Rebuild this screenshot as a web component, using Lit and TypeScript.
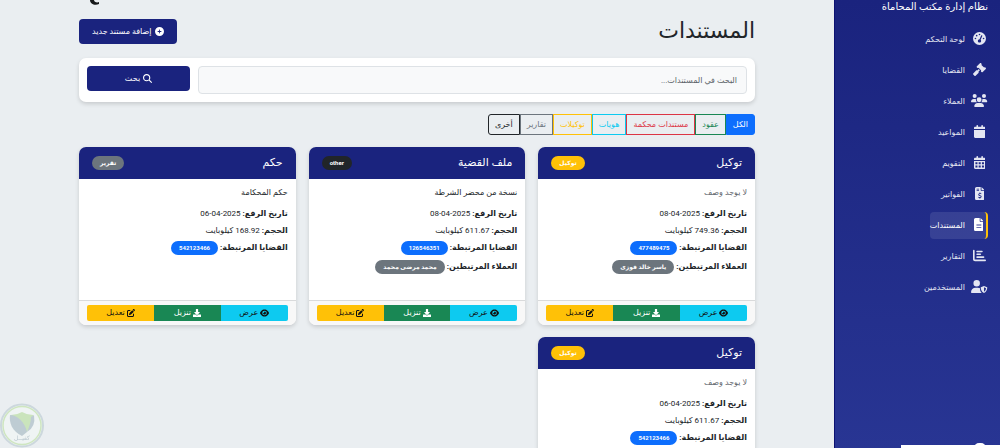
import { LitElement, html, css, svg } from "lit";
import { customElement, property } from "lit/decorators.js";
import { classMap } from "lit/directives/class-map.js";

interface Icon { box: string; d: string }

const ICONS: Record<string, Icon> = {
  gauge: { box: "0 0 512 512", d: "M0 256a256 256 0 1 1 512 0A256 256 0 1 1 0 256zM288 96a32 32 0 1 0 -64 0 32 32 0 1 0 64 0zM256 416c35.3 0 64-28.7 64-64c0-17.4-6.9-33.1-18.1-44.6L366 161.7c5.3-12.1-.2-26.3-12.3-31.6s-26.3 .2-31.6 12.3L257.9 288c-.6 0-1.3 0-1.9 0c-35.3 0-64 28.7-64 64s28.7 64 64 64zM176 144a32 32 0 1 0 -64 0 32 32 0 1 0 64 0zM96 288a32 32 0 1 0 0-64 32 32 0 1 0 0 64zm352-32a32 32 0 1 0 -64 0 32 32 0 1 0 64 0z" },
  gavel: { box: "0 0 512 512", d: "M318.6 9.4c-12.5-12.5-32.8-12.5-45.3 0l-120 120c-12.5 12.5-12.5 32.8 0 45.3l16 16c12.5 12.5 32.8 12.5 45.3 0l4-4L325.4 293.4l-4 4c-12.5 12.5-12.5 32.8 0 45.3l16 16c12.5 12.5 32.8 12.5 45.3 0l120-120c12.5-12.5 12.5-32.8 0-45.3l-16-16c-12.5-12.5-32.8-12.5-45.3 0l-4 4L330.6 74.6l4-4c12.5-12.5 12.5-32.8 0-45.3l-16-16zM166.600 297.400c-12.500-12.500-32.800-12.500-45.300 0l-112 112c-12.500 12.500-12.500 32.800 0 45.300l48 48c12.500 12.500 32.800 12.500 45.300 0l112-112c12.500-12.500 12.500-32.800 0-45.300l-1.400-1.400L272 285.300 226.700 240 168 298.700z" },
  users: { box: "0 0 640 512", d: "M144 0a80 80 0 1 1 0 160A80 80 0 1 1 144 0zM512 0a80 80 0 1 1 0 160A80 80 0 1 1 512 0zM0 298.700C0 239.800 47.800 192 106.700 192h42.700c15.900 0 31 3.500 44.600 9.700c-1.300 7.200-1.900 14.700-1.900 22.300c0 38.200 16.800 72.500 43.300 96H21.300C9.600 320 0 310.400 0 298.700zM405.300 320c26.600-23.500 42.600-57.800 42.600-96c0-7.600-.7-15-1.900-22.300c13.600-6.300 28.700-9.700 44.600-9.700h42.700C592.200 192 640 239.800 640 298.700c0 11.800-9.600 21.300-21.300 21.300zM224 224a96 96 0 1 1 192 0 96 96 0 1 1 -192 0zM128 485.300C128 411.700 187.700 352 261.300 352H378.700C452.300 352 512 411.700 512 485.300c0 14.700-11.900 26.700-26.700 26.700H154.700c-14.700 0-26.700-11.900-26.700-26.700z" },
  calendar: { box: "0 0 448 512", d: "M96 32V64H48C21.500 64 0 85.500 0 112v48H448V112c0-26.500-21.500-48-48-48H352V32c0-17.700-14.300-32-32-32s-32 14.300-32 32V64H160V32c0-17.700-14.300-32-32-32S96 14.300 96 32zM448 192H0V464c0 26.500 21.500 48 48 48H400c26.500 0 48-21.500 48-48V192z" },
  calendarDays: { box: "0 0 448 512", d: "M96 32V64H48C21.500 64 0 85.500 0 112v48H448V112c0-26.500-21.500-48-48-48H352V32c0-17.700-14.300-32-32-32s-32 14.300-32 32V64H160V32c0-17.700-14.300-32-32-32S96 14.300 96 32zM448 192H0V464c0 26.500 21.500 48 48 48H400c26.500 0 48-21.500 48-48V192zM56 248h80v72H56zM184 248h80v72h-80zM312 248h80v72h-80zM56 376h80v72H56zM184 376h80v72h-80zM312 376h80v72h-80z" },
  invoice: { box: "0 0 384 512", d: "M64 0C28.700 0 0 28.700 0 64V448c0 35.300 28.700 64 64 64H320c35.300 0 64-28.700 64-64V160H256c-17.700 0-32-14.300-32-32V0H64zM256 0V128H384L256 0zM64 64h96v32H64zM64 128h96v32H64zM176 216h32v28c18 2 32 6 46 11l-10 34c-22-8-40-11-53-10-20 0-30 8-29 18 2 12 18 16 42 23 30 9 57 24 56 57-1 30-22 50-52 56v31h-32v-30c-20-3-38-9-54-16l12-34c20 8 40 14 58 14 22 0 34-8 33-20-1-14-18-18-44-26-30-9-53-22-53-53 0-28 20-48 48-54z" },
  file: { box: "0 0 384 512", d: "M64 0C28.700 0 0 28.700 0 64V448c0 35.300 28.700 64 64 64H320c35.300 0 64-28.700 64-64V160H256c-17.700 0-32-14.300-32-32V0H64zM256 0V128H384L256 0zM96 256H288v36H96zM96 352H288v36H96z" },
  chart: { box: "0 0 512 512", d: "M32 32c17.700 0 32 14.300 32 32V400c0 8.800 7.200 16 16 16H480c17.700 0 32 14.300 32 32s-14.300 32-32 32H80c-44.200 0-80-35.800-80-80V64C0 46.300 14.300 32 32 32zM160 64H352c18 0 32 14 32 32s-14 32-32 32H160c-18 0-32-14-32-32s14-32 32-32zM160 176H288c18 0 32 14 32 32s-14 32-32 32H160c-18 0-32-14-32-32s14-32 32-32zM160 288H416c18 0 32 14 32 32s-14 32-32 32H160c-18 0-32-14-32-32s14-32 32-32z" },
  userShield: { box: "0 0 640 512", d: "M224 0a128 128 0 1 1 0 256A128 128 0 1 1 224 0zM178 304h92c31 0 60 8 85 22v42c0 60 26 112 70 144H30c-17 0-30-13-30-30C0 384 80 304 178 304zM512 240l122 48c4 2 6 5 6 10 0 80-30 170-128 214-98-44-128-134-128-214 0-5 2-8 6-10zM512 290v170c54-30 76-84 80-138z" },
  plus: { box: "0 0 512 512", d: "M256 512A256 256 0 1 0 256 0a256 256 0 1 0 0 512zM232 344V280H168c-13.300 0-24-10.700-24-24s10.700-24 24-24h64V168c0-13.300 10.700-24 24-24s24 10.700 24 24v64h64c13.300 0 24 10.700 24 24s-10.700 24-24 24H280v64c0 13.300-10.700 24-24 24s-24-10.700-24-24z" },
  search: { box: "0 0 512 512", d: "M416 208c0 45.900-14.900 88.300-40 122.700L502.600 457.400c12.500 12.500 12.500 32.800 0 45.300s-32.800 12.500-45.300 0L330.700 376c-34.400 25.200-76.800 40-122.700 40C93.100 416 0 322.900 0 208S93.100 0 208 0S416 93.100 416 208zM208 352a144 144 0 1 0 0-288 144 144 0 1 0 0 288z" },
  eye: { box: "0 0 576 512", d: "M288 32c-80.800 0-145.500 36.800-192.600 80.600C48.600 156 17.300 208 2.500 243.700c-3.300 7.900-3.300 16.700 0 24.600C17.300 304 48.600 356 95.400 399.400C142.500 443.200 207.200 480 288 480s145.500-36.800 192.600-80.600c46.800-43.500 78.100-95.400 93-131.100c3.300-7.900 3.300-16.700 0-24.600c-14.900-35.700-46.200-87.700-93-131.100C433.500 68.800 368.800 32 288 32zM144 256a144 144 0 1 1 288 0 144 144 0 1 1 -288 0zM288 160c0 53-43 96-96 96 0 53 43 96 96 96s96-43 96-96-43-96-96-96z" },
  download: { box: "0 0 512 512", d: "M208 0h96c14 0 24 10 24 24v168h88c18 0 27 21 14 34L274 380c-10 10-26 10-36 0L82 226c-13-13-4-34 14-34h88V24c0-14 10-24 24-24zM512 376v112c0 13-11 24-24 24H24c-13 0-24-11-24-24V376c0-13 11-24 24-24h146l49 49c20 20 54 20 74 0l49-49h146c13 0 24 11 24 24z" },
  edit: { box: "0 0 512 512", d: "M471.600 21.700c-21.900-21.900-57.300-21.900-79.200 0L362.300 51.700l97.900 97.900 30.100-30.100c21.900-21.900 21.900-57.300 0-79.200L471.600 21.700zM172.400 241.700c-6.100 6.100-10.800 13.600-13.500 21.900l-29.600 88.800c-2.900 8.600-.6 18.100 5.800 24.600s15.900 8.700 24.600 5.800l88.800-29.600c8.200-2.700 15.700-7.400 21.900-13.500L437.700 172.300 339.700 74.300 172.400 241.700zM96 64C43 64 0 107 0 160V416c0 53 43 96 96 96H352c53 0 96-43 96-96V320c0-17.700-14.300-32-32-32s-32 14.300-32 32v96c0 17.700-14.300 32-32 32H96c-17.700 0-32-14.300-32-32V160c0-17.700 14.300-32 32-32h96c17.700 0 32-14.300 32-32s-14.300-32-32-32H96z" },
};

const icon = (name: string) => html`<svg class="icon" viewBox=${ICONS[name].box} aria-hidden="true">${svg`<path fill-rule="evenodd" d=${ICONS[name].d}></path>`}</svg>`;

const NAV: [string, string][] = [
  ["gauge", "لوحة التحكم"],
  ["gavel", "القضايا"],
  ["users", "العملاء"],
  ["calendar", "المواعيد"],
  ["calendarDays", "التقويم"],
  ["invoice", "الفواتير"],
  ["file", "المستندات"],
  ["chart", "التقارير"],
  ["userShield", "المستخدمين"],
];

const FILTERS: [string, string][] = [
  ["all", "الكل"],
  ["green", "عقود"],
  ["red", "مستندات محكمة"],
  ["cyan", "هويات"],
  ["yellow", "توكيلات"],
  ["gray", "تقارير"],
  ["dark", "أخرى"],
];

interface Doc {
  title: string;
  tag: string;
  tone: string;
  desc: string;
  date: string;
  size: string;
  cases: string[];
  clients: string[];
}

const NO_DESC = "لا يوجد وصف";

const DOCS: Doc[] = [
  { title: "توكيل", tag: "توكيل", tone: "yellow", desc: "", date: "08-04-2025", size: "749.36", cases: ["477489475"], clients: ["ياسر خالد فوزى"] },
  { title: "ملف القضية", tag: "other", tone: "dark", desc: "نسخة من محضر الشرطة", date: "08-04-2025", size: "611.67", cases: ["126546351"], clients: ["محمد مرضى محمد"] },
  { title: "حكم", tag: "تقرير", tone: "gray", desc: "حكم المحكامة", date: "06-04-2025", size: "168.92", cases: ["542123466"], clients: [] },
  { title: "توكيل", tag: "توكيل", tone: "yellow", desc: "", date: "06-04-2025", size: "611.67", cases: ["542123466"], clients: [] },
];

const shared = css`
  * { box-sizing: border-box; margin: 0; padding: 0; }
  button, input { font: inherit; border: 0; }
  button { cursor: pointer; }
  a { color: inherit; text-decoration: none; }
  .icon { height: 8px; width: auto; fill: currentColor; flex: none; }
`;

@customElement("document-card")
class DocumentCard extends LitElement {
  @property({ attribute: false }) doc!: Doc;

  static styles = [shared, css`
    :host {
      display: flex;
      flex-direction: column;
      min-height: 178px;
      background: #fff;
      border-radius: 7px;
      overflow: hidden;
      box-shadow: 0 2px 4px rgba(0, 0, 0, 0.15);
      color: #212529;
      font-size: 8px;
    }
    .head {
      display: flex;
      align-items: center;
      justify-content: space-between;
      height: 32px;
      padding: 0 13px;
      background: #1a237e;
      color: #fff;
    }
    .title { font-size: 11px; font-weight: 400; line-height: 20px; }
    .badge {
      display: inline-block;
      padding: 0 8px;
      border-radius: 8px;
      font-size: 6px;
      font-weight: 700;
      line-height: 14px;
      color: #fff;
    }
    .yellow { background: #ffc107; }
    .dark { background: #212529; }
    .gray { background: #6c757d; }
    .blue { background: #0d6efd; }
    .body { flex: 1; padding: 7px 8px 8px; }
    .line { line-height: 17px; display: flex; align-items: center; gap: 2px; }
    .desc { line-height: 14px; margin-bottom: 5px; }
    .muted { color: #5f676e; }
    .people { margin-top: 2px; }
    .foot {
      display: flex;
      padding: 4px 8px;
      border-top: 1px solid #d9dadb;
      background: #f8f8f8;
    }
    .act {
      flex: 1;
      display: flex;
      align-items: center;
      justify-content: center;
      gap: 2px;
      height: 16px;
      font-size: 8px;
      line-height: 16px;
      color: #111;
    }
    .view { background: #0dcaf0; border-radius: 0 2px 2px 0; }
    .get { background: #198754; color: #fff; }
    .edit { background: #ffc107; border-radius: 2px 0 0 2px; }
  `];

  render() {
    const d = this.doc;
    return html`
      <header class="head">
        <h2 class="title">${d.title}</h2>
        <span class="badge ${d.tone}">${d.tag}</span>
      </header>
      <div class="body">
        <p class="desc ${d.desc ? "" : "muted"}">${d.desc || NO_DESC}</p>
        <p class="line"><strong>تاريخ الرفع:</strong><span>${d.date}</span></p>
        <p class="line"><strong>الحجم:</strong><span>${d.size} كيلوبايت</span></p>
        <p class="line"><strong>القضايا المرتبطة:</strong>${d.cases.map((c) => html`<a class="badge blue" href="#">${c}</a>`)}</p>
        ${d.clients.length
          ? html`<p class="line people"><strong>العملاء المرتبطين:</strong>${d.clients.map((c) => html`<span class="badge gray">${c}</span>`)}</p>`
          : ""}
      </div>
      <footer class="foot">
        <button class="act view">${icon("eye")}<span>عرض</span></button>
        <button class="act get">${icon("download")}<span>تنزيل</span></button>
        <button class="act edit">${icon("edit")}<span>تعديل</span></button>
      </footer>`;
  }
}

@customElement("app-root")
class AppRoot extends LitElement {
  static styles = [shared, css`
    :host {
      display: flex;
      height: 100vh;
      background: #eaeef1;
      color: #212529;
      font-family: Roboto, "DejaVu Sans", sans-serif;
      font-size: 8px;
      direction: rtl;
    }
    .side {
      position: relative;
      flex: none;
      width: 166px;
      padding: 0 12px;
      overflow: hidden;
      background: linear-gradient(#1a237e, #283593);
      border-left: 1px solid #0d1272;
      color: #fff;
    }
    .brand { font-size: 10px; font-weight: 400; line-height: 14px; margin-bottom: 12px; white-space: nowrap; }
    .nav { display: flex; flex-direction: column; align-items: flex-start; gap: 4px; list-style: none; }
    .link {
      display: flex;
      align-items: center;
      gap: 6px;
      height: 27px;
      font-size: 8px;
      color: #e4e6f2;
      border-radius: 4px;
      white-space: nowrap;
    }
    .glyph { display: flex; justify-content: center; width: 17px; }
    .link .icon { height: 13px; margin-bottom: 3px; }
    .link.active { background: rgba(255, 255, 255, 0.1); border-right: 2px solid #ffc107; color: #fff; }
    .link.active .glyph { width: 15px; }
    .dock { position: absolute; right: 0; bottom: 0; width: 99px; height: 3px; background: #fff; }
    .avatar { position: absolute; right: 14px; bottom: 0; width: 12px; height: 5px; border-radius: 6px 6px 0 0; background: #fff; }
    .main { position: relative; flex: 1; min-width: 0; padding: 16px 79px 12px; overflow-y: auto; scrollbar-width: none; }
    .crumb { position: absolute; left: 89px; top: 0; width: 12px; height: 5px; }
    .top { display: flex; justify-content: space-between; align-items: center; height: 30px; margin-bottom: 12px; }
    .heading { font-size: 22px; font-weight: 400; line-height: 28px; }
    .primary {
      display: flex;
      align-items: center;
      justify-content: center;
      gap: 3px;
      height: 25px;
      padding: 0 13px;
      border-radius: 4px;
      background: #1a237e;
      color: #fff;
      font-size: 8px;
    }
    .primary .icon { height: 9px; }
    .search {
      display: grid;
      grid-template-columns: 16fr 3fr;
      gap: 8px;
      padding: 8px;
      border-radius: 7px;
      background: #fff;
      box-shadow: 0 2px 4px rgba(0, 0, 0, 0.15);
      margin-bottom: 12px;
    }
    .field {
      width: 100%;
      height: 28px;
      padding: 0 9px;
      border: 1px solid #dee2e6;
      border-radius: 4px;
      background: #f8f9fa;
      color: #212529;
    }
    .field::placeholder { color: #5b6268; opacity: 1; }
    .filters { display: flex; width: max-content; margin-bottom: 12px; }
    .pill {
      height: 21px;
      padding: 0 6px;
      border: 1px solid currentColor;
      background: none;
      font-size: 8px;
      white-space: nowrap;
    }
    .pill:first-child { border-radius: 0 3px 3px 0; }
    .pill:last-child { border-radius: 3px 0 0 3px; }
    .all { background: #0d6efd; border-color: #0d6efd; color: #fff; }
    .green { color: #198754; }
    .red { color: #dc3545; }
    .cyan { color: #0dcaf0; }
    .yellow { color: #ffc107; }
    .gray { color: #6c757d; }
    .dark { color: #212529; }
    .cards { display: grid; grid-template-columns: repeat(3, 1fr); gap: 12px 13px; }
    .seal { position: fixed; left: 0; bottom: 0; width: 45px; height: 45px; opacity: 0.45; }
    .seal-text { font-size: 6px; font-family: "DejaVu Sans", sans-serif; fill: #7b93a1; }
  `];

  render() {
    return html`
      <aside class="side">
        <h2 class="brand">نظام إدارة مكتب المحاماة</h2>
        <nav>
          <ul class="nav">
            ${NAV.map(([name, label]) => html`
              <li><a href="#" class=${classMap({ link: true, active: name === "file" })}>
                <span class="glyph">${icon(name)}</span><span>${label}</span>
              </a></li>`)}
          </ul>
        </nav>
        <div class="dock"></div>
        <div class="avatar"></div>
      </aside>
      <main class="main">
        <svg class="crumb" viewBox="0 0 12 5" aria-hidden="true"><path d="M1 0H5C5 2 8 3 10 2V4C6 6 1 4 1 0Z" fill="#16181a"></path></svg>
        <div class="top">
          <h1 class="heading">المستندات</h1>
          <button class="primary">${icon("plus")}<span>إضافة مستند جديد</span></button>
        </div>
        <form class="search" @submit=${(e: Event) => e.preventDefault()}>
          <input class="field" type="text" aria-label="البحث في المستندات" placeholder="البحث في المستندات..." />
          <button class="primary">${icon("search")}<span>بحث</span></button>
        </form>
        <div class="filters">
          ${FILTERS.map(([tone, label]) => html`<button class="pill ${tone}">${label}</button>`)}
        </div>
        <section class="cards">
          ${DOCS.map((d) => html`<document-card .doc=${d}></document-card>`)}
        </section>
        <svg class="seal" viewBox="0 0 45 45" aria-hidden="true">
          <circle cx="22" cy="22.500" r="21" fill="#f6faf8" stroke="#a9bcc6" stroke-width="2"></circle>
          <circle cx="22" cy="22.500" r="19" fill="none" stroke="#aedb86" stroke-width="1.500"></circle>
          <path d="M11 12Q17 12 22 9Q27 12 33 12Q34 25 22 32Q10 25 11 12Z" fill="#a5d77d"></path>
          <path d="M10 12C17 12 25 19 27 29L22 33C12 28 9 20 10 12Z" fill="#8ba2b0"></path>
          <path d="M34 12Q36 24 27 29Q31 20 31 14Z" fill="#8ba2b0"></path>
          <text class="seal-text" x="22" y="37" text-anchor="middle">كفيــل</text>
        </svg>
      </main>`;
  }
}
